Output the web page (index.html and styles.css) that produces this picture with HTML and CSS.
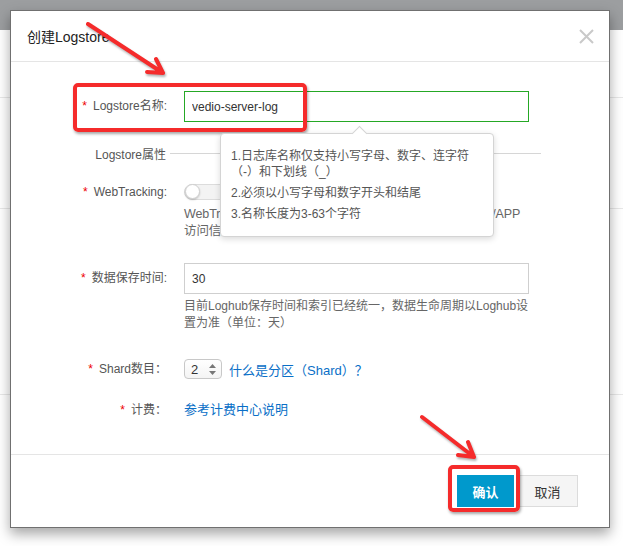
FILE: index.html
```html
<!DOCTYPE html>
<html lang="zh-CN">
<head>
    <meta charset="UTF-8">
    <meta name="viewport" content="width=device-width, initial-scale=1.0">
    <title>创建Logstore</title>
    <link rel="stylesheet" href="styles.css">
</head>
<body>
    <div class="page">
        <div class="topbar"></div>
        <div class="page-row row-a"></div>
        <div class="page-row row-b"></div>
        <div class="page-row row-c"></div>
    </div>

    <div class="dialog">
        <div class="dialog-header">
            <span class="dialog-title">创建Logstore</span>
            <svg class="close" width="15" height="15" viewBox="0 0 15 15">
                <path d="M1 1L14 14M14 1L1 14" stroke="#c9c9c9" stroke-width="2" fill="none"/>
            </svg>
        </div>

        <div class="dialog-body">
            <div class="form-row row-name">
                <label class="form-label required">Logstore名称:</label>
                <div class="form-control">
                    <input class="input input-ok" type="text" value="vedio-server-log">
                    <div class="tooltip">
                        <p>1.日志库名称仅支持小写字母、数字、连字符（-）和下划线（_）</p>
                        <p>2.必须以小写字母和数字开头和结尾</p>
                        <p>3.名称长度为3-63个字符</p>
                    </div>
                </div>
            </div>

            <div class="section">
                <span class="section-title">Logstore属性</span>
                <span class="section-line"></span>
            </div>

            <div class="form-row row-track">
                <label class="form-label required">WebTracking:</label>
                <div class="form-control">
                    <span class="switch"><span class="knob"></span></span>
                    <div class="help">WebTracking功能支持采集HTML、H5、iOS以及Android/APP访问信息，默认关闭<a href="#">（帮助）</a></div>
                </div>
            </div>

            <div class="form-row row-ttl">
                <label class="form-label required">数据保存时间:</label>
                <div class="form-control">
                    <input class="input" type="text" value="30">
                    <div class="help help-ttl">目前Loghub保存时间和索引已经统一，数据生命周期以Loghub设置为准（单位：天）</div>
                </div>
            </div>

            <div class="form-row row-shard">
                <label class="form-label required">Shard数目：</label>
                <div class="form-control inline">
                    <span class="select">
                        <span>2</span>
                        <svg width="7" height="11" viewBox="0 0 7 11">
                            <path d="M3.5 0L7 4H0Z M3.5 11L0 7H7Z" fill="#777"/>
                        </svg>
                    </span>
                    <a href="#">什么是分区（Shard）？</a>
                </div>
            </div>

            <div class="form-row row-fee">
                <label class="form-label required">计费：</label>
                <div class="form-control">
                    <a href="#">参考计费中心说明</a>
                </div>
            </div>
        </div>

        <div class="dialog-footer">
            <button class="btn btn-primary">确认</button>
            <button class="btn">取消</button>
        </div>
    </div>

    <!-- annotations -->
    <div class="mark mark-name"></div>
    <div class="mark mark-ok"></div>
    <svg class="arrows" width="623" height="546" viewBox="0 0 623 546">
        <g stroke="#f52b2b" stroke-width="4" stroke-linecap="round" stroke-linejoin="round" fill="none">
            <path d="M88 24L163 73M156 59L163 73L147 72"/>
            <path d="M422 417L474 457M468 442L474 457L458 455"/>
        </g>
    </svg>
</body>
</html>
```

FILE: styles.css
```css
body, html {
    margin: 0;
    padding: 0;
    height: 100%;
    font-family: 'Liberation Sans', 'Noto Sans CJK SC', sans-serif;
    background: #fff;
    color: #333;
}
a {
    color: #0a6fc7;
    text-decoration: none;
}

/* page behind the dialog */
.topbar {
    height: 30px;
    background: #9c9ea0;
}
.page-row {
    box-sizing: border-box;
    border-bottom: 1px solid #e8e8e8;
}
.row-a { height: 68px; }
.row-b { height: 111px; }
.row-c { height: 186px; }

/* dialog */
.dialog {
    position: absolute;
    left: 10px;
    top: 10px;
    width: 600px;
    height: 518px;
    box-sizing: border-box;
    border: 1px solid #707070;
    background: #fff;
    box-shadow: 0 6px 12px rgba(0, 0, 0, 0.35);
    display: flex;
    flex-direction: column;
}
.dialog-header {
    height: 50px;
    flex: none;
    border-bottom: 1px solid #e5e5e5;
    display: flex;
    align-items: center;
    justify-content: space-between;
    padding: 0 15px 0 16px;
}
.dialog-title {
    font-size: 14px;
    color: #222;
}
.dialog-body {
    flex: 1;
    padding-top: 29px;
    border-bottom: 1px solid #e5e5e5;
}
.dialog-footer {
    height: 72px;
    flex: none;
    display: flex;
    align-items: center;
    justify-content: flex-end;
    gap: 3px;
    padding-right: 31px;
}

/* form */
.form-row {
    display: grid;
    grid-template-columns: 156px 345px;
    column-gap: 17px;
}
.form-label {
    text-align: right;
    font-size: 12px;
    color: #555;
}
.required::before {
    content: '*';
    color: #e00;
    margin-right: 6px;
}
.form-control {
    position: relative;
    font-size: 12px;
}
.form-control.inline {
    display: flex;
    align-items: center;
    gap: 7px;
}
.input {
    display: block;
    box-sizing: border-box;
    width: 345px;
    height: 31px;
    margin: 0;
    padding: 0 7px;
    border: 1px solid #cfcfcf;
    font-family: inherit;
    font-size: 12px;
    color: #333;
    outline: none;
}
.input-ok {
    border-color: #25a825;
}
.help {
    margin-top: 6px;
    font-size: 12.5px;
    letter-spacing: -0.1px;
    line-height: 17px;
    color: #666;
}
.help-ttl {
    margin-top: 4px;
    font-size: 12px;
    letter-spacing: 0;
}

.row-name .form-label { line-height: 31px; }

.section {
    display: flex;
    align-items: center;
    height: 16px;
    margin-top: 23px;
    font-size: 12px;
    color: #555;
}
.section-title {
    width: 155px;
    text-align: right;
}
.section-line {
    flex: 1;
    height: 1px;
    background: #d6d6d6;
    margin: 0 68px 0 4px;
}

.row-track { margin-top: 23px; }
.row-track .form-label { line-height: 16px; }
.switch {
    display: block;
    position: relative;
    box-sizing: border-box;
    width: 44px;
    height: 16px;
    border: 1px solid #dcdcdc;
    border-radius: 8px;
    background: #f3f3f3;
}
.knob {
    position: absolute;
    left: 0;
    top: -1px;
    width: 15px;
    height: 15px;
    border-radius: 50%;
    background: #fff;
    border: 1px solid #d0d0d0;
    box-sizing: border-box;
    box-shadow: 0 1px 2px rgba(0, 0, 0, 0.2);
}

.row-ttl { margin-top: 23px; }
.row-ttl .form-label { line-height: 31px; }

.row-shard { margin-top: 27px; }
.row-shard .form-label { line-height: 20px; }
.row-shard a { font-size: 13px; }
.select {
    box-sizing: border-box;
    width: 38px;
    height: 20px;
    border: 1px solid #c8c8c8;
    border-radius: 4px;
    background: linear-gradient(#fff, #f4f4f4);
    display: flex;
    align-items: center;
    justify-content: space-between;
    padding: 0 5px 0 6px;
    font-size: 13px;
    color: #333;
}

.row-fee { margin-top: 22px; }
.row-fee .form-label,
.row-fee .form-control { line-height: 18px; }
.row-fee a { font-size: 13px; }

/* tooltip */
.tooltip {
    position: absolute;
    left: 36px;
    top: 42px;
    width: 274px;
    box-sizing: border-box;
    padding: 14px 20px 14px 10px;
    background: #fff;
    border: 1px solid #d4d4d4;
    border-radius: 4px;
    box-shadow: 0 2px 6px rgba(0, 0, 0, 0.15);
    color: #555;
    font-size: 12px;
    line-height: 16px;
    z-index: 2;
}
.tooltip::before {
    content: '';
    position: absolute;
    top: -6px;
    left: 133px;
    width: 10px;
    height: 10px;
    background: #fff;
    border-top: 1px solid #d4d4d4;
    border-left: 1px solid #d4d4d4;
    transform: rotate(45deg);
}
.tooltip p {
    margin: 0 0 5px;
}
.tooltip p:last-child {
    margin-bottom: 0;
}

/* buttons */
.btn {
    height: 32px;
    width: 61px;
    margin: 0;
    border: 1px solid #dcdcdc;
    background: #f5f5f5;
    font-family: inherit;
    font-size: 13px;
    color: #333;
    cursor: pointer;
}
.btn-primary {
    width: 57px;
    border-color: #0099cc;
    background: #0099cc;
    color: #fff;
    font-weight: bold;
}

/* red annotations */
.mark {
    position: absolute;
    box-sizing: border-box;
    border: 4px solid #f52b2b;
    border-radius: 5px;
    box-shadow: 1px 2px 3px rgba(0, 0, 0, 0.35);
}
.mark-name {
    left: 73px;
    top: 83px;
    width: 234px;
    height: 49px;
}
.mark-ok {
    left: 448px;
    top: 465px;
    width: 72px;
    height: 47px;
}
.arrows {
    position: absolute;
    left: 0;
    top: 0;
    filter: drop-shadow(1px 2px 1px rgba(0, 0, 0, 0.3));
}
```
